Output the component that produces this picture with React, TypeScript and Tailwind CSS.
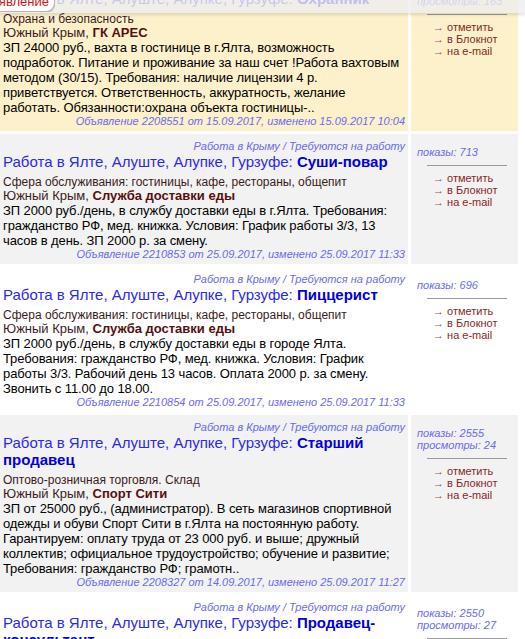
import React from 'react';

type Ad = {
  job: string;
  category: string;
  company: string;
  body: string;
  id: string;
  created: string;
  changed: string;
  shows: string;
  views?: string;
  bg: string;
};

const ads: Ad[] = [
  {
    job: 'Охранник',
    category: 'Охрана и безопасность',
    company: 'ГК АРЕС',
    body: 'ЗП 24000 руб., вахта в гостинице в г.Ялта, возможность подработок. Питание и проживание за наш счет !Работа вахтовым методом (30/15). Требования: наличие лицензии 4 р. приветствуется. Ответственность, аккуратность, желание работать. Обязанности:охрана объекта гостиницы-..',
    id: '2208551',
    created: '15.09.2017',
    changed: '15.09.2017 10:04',
    shows: '1847',
    views: '163',
    bg: 'bg-[#fdf1cb]',
  },
  {
    job: 'Суши-повар',
    category: 'Сфера обслуживания: гостиницы, кафе, рестораны, общепит',
    company: 'Служба доставки еды',
    body: 'ЗП 2000 руб./день, в службу доставки еды в г.Ялта. Требования: гражданство РФ, мед. книжка. Условия: График работы 3/3, 13 часов в день. ЗП 2000 р. за смену.',
    id: '2210853',
    created: '25.09.2017',
    changed: '25.09.2017 11:33',
    shows: '713',
    bg: 'bg-[#f2f2f2]',
  },
  {
    job: 'Пиццерист',
    category: 'Сфера обслуживания: гостиницы, кафе, рестораны, общепит',
    company: 'Служба доставки еды',
    body: 'ЗП 2000 руб./день, в службу доставки еды в городе Ялта. Требования: гражданство РФ, мед. книжка. Условия: График работы 3/3. Рабочий день 13 часов. Оплата 2000 р. за смену. Звонить с 11.00 до 18.00.',
    id: '2210854',
    created: '25.09.2017',
    changed: '25.09.2017 11:33',
    shows: '696',
    bg: 'bg-white',
  },
  {
    job: 'Старший продавец',
    category: 'Оптово-розничная торговля. Склад',
    company: 'Спорт Сити',
    body: 'ЗП от 25000 руб., (администратор). В сеть магазинов спортивной одежды и обуви Спорт Сити в г.Ялта на постоянную работу. Гарантируем: оплату труда от 23 000 руб. и выше; дружный коллектив; официальное трудоустройство; обучение и развитие; Требования: гражданство РФ; грамотн..',
    id: '2208327',
    created: '14.09.2017',
    changed: '25.09.2017 11:27',
    shows: '2555',
    views: '24',
    bg: 'bg-[#f2f2f2]',
  },
  {
    job: 'Продавец-консультант',
    category: 'Оптово-розничная торговля. Склад',
    company: 'Спорт Сити',
    body: 'ЗП от 22000 руб. В сеть магазинов спортивной одежды и обуви Спорт Сити в г.Ялта на постоянную работу.',
    id: '2208328',
    created: '14.09.2017',
    changed: '25.09.2017 11:27',
    shows: '2550',
    views: '27',
    bg: 'bg-white',
  },
];

function AdRow({ ad }: { ad: Ad }) {
  return (
    <div className="flex gap-[3px]">
      <div className={`w-[408px] px-[3px] pt-[5px] pb-[3px] ${ad.bg}`}>
        <div className="text-right text-[11px] leading-[14px] italic text-[#6a6af0]">
          Работа в Крыму / Требуются на работу
        </div>
        <div className="text-[15px] leading-[17px] text-[#2a2aee]">
          Работа в Ялте, Алуште, Алупке, Гурзуфе: <b className="text-[#0000e0]">{ad.job}</b>
        </div>
        <div className="mt-[5px] text-[12px] leading-[14px] text-[#3b1b1b]">{ad.category}</div>
        <div className="text-[13px] leading-[14px] text-[#3b1b1b]">
          Южный Крым, <b className="text-[#551010]">{ad.company}</b>
        </div>
        <div className="text-[13px] leading-[15px] tracking-[-0.1px] text-black">{ad.body}</div>
        <div className="text-right text-[11px] leading-[13px] italic text-[#6a6af0]">
          Объявление {ad.id} от {ad.created}, изменено {ad.changed}
        </div>
      </div>
      <div className={`w-[107px] pl-[6px] pt-[12px] ${ad.bg}`}>
        <div className="text-[11px] leading-[12px] italic text-[#6a6af0]">
          <div>показы: {ad.shows}</div>
          {ad.views && <div>просмотры: {ad.views}</div>}
        </div>
        <div className="mt-[7px] ml-[10px] w-[80px] border-t border-[#9a9a9a]" />
        <ul className="mt-[6px] pl-[16px] text-[11px] leading-[12px] text-[#8b2626]">
          {['отметить', 'в Блокнот', 'на e-mail'].map((l) => (
            <li key={l}>
              <span className="text-[#8b5555]">→</span> {l}
            </li>
          ))}
        </ul>
      </div>
    </div>
  );
}

export default function App() {
  return (
    <div className="relative h-[639px] overflow-hidden bg-white font-['Liberation_Sans',Arial,sans-serif]">
      <div className="-mt-[29px] flex flex-col gap-[3px] pr-[7px]">
        {ads.map((ad) => (
          <AdRow key={ad.id} ad={ad} />
        ))}
      </div>
      <div className="absolute inset-x-0 top-0 h-[13px] bg-[#eeeeee]/80 shadow-[0_2px_3px_rgba(0,0,0,0.12)]" />
      <div className="absolute left-0 top-[-10px] flex h-[22px] w-[55px] justify-end overflow-hidden">
        <div className="whitespace-nowrap rounded-[9px] border border-[#b5b5b5] bg-white px-[5px] pt-[3px] text-[13px] leading-[15px] text-[#cc1a1a] shadow-[0_1px_2px_rgba(0,0,0,0.25)]">
          Подать объявление
        </div>
      </div>
    </div>
  );
}
